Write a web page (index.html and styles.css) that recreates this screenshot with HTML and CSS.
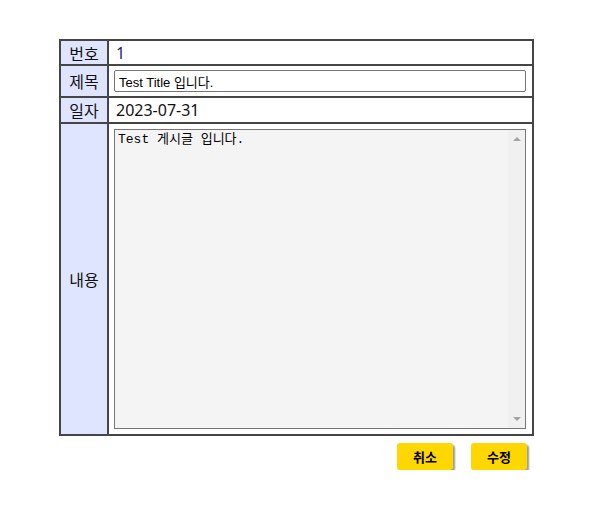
FILE: index.html
```html
<!DOCTYPE html>
<html lang="ko">
<head>
<meta charset="utf-8">
<link rel="stylesheet" href="styles.css">
</head>
<body>
<div class="wrap">
  <table class="board">
    <tr class="r-no">
      <th>번호</th>
      <td class="val">1</td>
    </tr>
    <tr class="r-title">
      <th>제목</th>
      <td class="field"><input class="title-in" type="text" value="Test Title 입니다."></td>
    </tr>
    <tr class="r-date">
      <th>일자</th>
      <td class="val">2023-07-31</td>
    </tr>
    <tr class="r-body">
      <th>내용</th>
      <td class="field">
        <div class="ta-box">
          <textarea class="body-in">Test 게시글 입니다.</textarea>
          <div class="sbar" aria-hidden="true">
            <span class="arrow up"></span>
            <span class="arrow down"></span>
          </div>
        </div>
      </td>
    </tr>
  </table>
  <div class="actions">
    <button class="btn" type="button">취소</button>
    <button class="btn" type="button">수정</button>
  </div>
</div>
</body>
</html>
```

FILE: styles.css
```css
html, body {
  margin: 0;
  padding: 0;
  background: #fff;
}
body {
  font-family: "Noto Sans", "Noto Sans CJK KR", sans-serif;
}
.wrap {
  width: 475px;
  margin: 39px 0 0 59px;
}
.board {
  border-collapse: collapse;
  width: 475px;
  border: 2px solid #454545;
}
.board th,
.board td {
  border: 2px solid #454545;
  padding: 0;
}
.board th {
  width: 46px;
  background: #dfe5ff;
  font-weight: normal;
  font-size: 16px;
  color: #111;
  text-align: center;
  font-family: "Noto Sans CJK KR", sans-serif;
  line-height: 20px;
}
.r-no th, .r-no td { height: 23px; }
.r-title th, .r-title td { height: 30px; }
.r-date th, .r-date td { height: 24px; }
.r-body th, .r-body td { height: 310px; }
.val {
  padding: 0 0 0 7px !important;
  font-size: 16px;
  color: #111;
  line-height: 20px;
}
.r-no .val { color: #2a1a70; }
.field {
  padding: 0 6px 0 5px !important;
  vertical-align: middle;
}
.title-in {
  display: block;
  box-sizing: border-box;
  width: 412px;
  height: 22px;
  margin: 0;
  padding: 1px 4px 0;
  border: 1px solid #767676;
  border-radius: 2px;
  font-family: "Liberation Sans", "Noto Sans CJK KR", sans-serif;
  font-size: 13px;
  color: #000;
  background: #fff;
}
.ta-box {
  position: relative;
  width: 412px;
  height: 300px;
}
.body-in {
  display: block;
  box-sizing: border-box;
  width: 412px;
  height: 300px;
  margin: 0;
  padding: 2px 20px 2px 3px;
  border: 1px solid #767676;
  background: #f4f4f4;
  font-family: "Liberation Mono", "Noto Sans CJK KR", monospace;
  font-size: 13px;
  line-height: 15px;
  color: #000;
  resize: none;
  overflow: hidden;
}
.sbar {
  position: absolute;
  top: 1px;
  right: 1px;
  bottom: 1px;
  width: 17px;
  background: #f0f0f0;
}
.arrow {
  position: absolute;
  left: 5px;
  width: 0;
  height: 0;
  border-left: 4px solid transparent;
  border-right: 4px solid transparent;
}
.arrow.up {
  top: 7px;
  border-bottom: 4px solid #a3a3a3;
}
.arrow.down {
  bottom: 7px;
  border-top: 4px solid #a3a3a3;
}
.actions {
  display: flex;
  justify-content: flex-end;
  gap: 18px;
  padding: 7px 7px 0 0;
}
.btn {
  width: 56px;
  height: 27px;
  border: none;
  border-radius: 3px;
  background: #ffd700;
  box-shadow: 2px 2px 2px #9a9a9a;
  font-family: "Noto Sans CJK KR", sans-serif;
  font-weight: bold;
  font-size: 13px;
  color: #000;
  padding: 0;
}
```
